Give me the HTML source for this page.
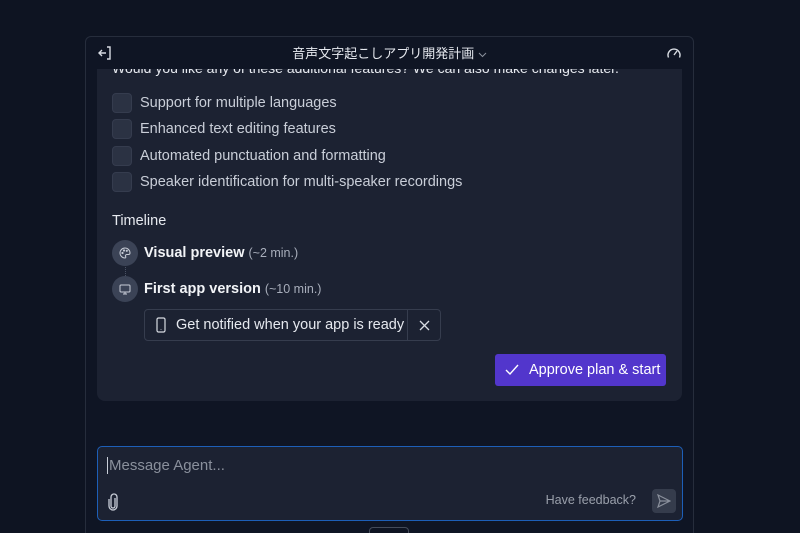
<!DOCTYPE html>
<html style="width:800px;height:533px;overflow:hidden"><head><meta charset="utf-8"><style>
*{box-sizing:border-box;margin:0;padding:0}
body{width:800px;height:533px;overflow:hidden;background:#0e1422;font-family:"Liberation Sans","Noto Sans CJK JP",sans-serif;color:#e6e9ef;position:relative}
.panel{position:absolute;left:85px;top:36px;width:609px;height:510px;border:1px solid #262d3c;border-radius:6px;background:#0f1524}
.hdr{position:absolute;left:0;top:0;width:100%;height:32px}
.title{position:absolute;left:0;right:0;top:6px;text-align:center;font-size:13px;color:#e6e9ef}
.card{position:absolute;left:11px;top:32px;width:585px;height:332px;background:#1c2232;border-radius:0 0 8px 8px;overflow:hidden}
.q{position:absolute;left:15px;top:-9px;font-size:14px;color:#e6e9ef}
.opt{position:absolute;left:15px;font-size:14.5px;color:#c9ced8;display:flex;align-items:center}
.cb{width:20px;height:20px;border-radius:4px;background:#2b3243;border:1px solid #353c4e;margin-right:8px}
.tl{position:absolute;left:15px;top:144px;font-size:14.5px;color:#e6e9ef}
.step{position:absolute;left:15px;display:flex;align-items:center;font-size:14.5px}
.ic{width:26px;height:26px;border-radius:50%;background:#3b4356;display:flex;align-items:center;justify-content:center;margin-right:6px}
.step b{color:#f2f4f7}
.step span{color:#a8aebb;font-size:12.5px;margin-left:4px}
.notif{position:absolute;left:47px;top:240px;width:297px;height:32px;border:1px solid #363d4e;border-radius:4px;display:flex;align-items:center;font-size:14.5px;color:#e6e9ef}
.notif .x{position:absolute;right:0;top:0;width:33px;height:30px;border-left:1px solid #363d4e;display:flex;align-items:center;justify-content:center}
.btn{position:absolute;left:398px;top:285px;width:171px;height:32px;background:#5236cc;border-radius:3px;font-size:14.5px;color:#fff;display:flex;align-items:center;padding-left:10px}
.inp{position:absolute;left:11px;top:409px;width:586px;height:75px;border:1px solid #1d5fb8;border-radius:5px;background:#1c2232}
.ph{position:absolute;left:9px;top:10px;font-size:15px;color:#8a909c;border-left:1px solid #c9ced8;padding-left:1px}
.fb{position:absolute;right:46px;top:46px;font-size:12.5px;color:#9aa0ab}
.send{position:absolute;right:6px;top:42px;width:24px;height:24px;border-radius:4px;background:#353c4c;display:flex;align-items:center;justify-content:center}
.tab{position:absolute;left:369px;top:527px;width:40px;height:10px;border:1px solid #444b5a;border-radius:4px;background:#0e1422}
</style></head><body>
<div class="panel">
 <div class="hdr">
  <svg style="position:absolute;left:11px;top:8px" width="16" height="16" viewBox="0 0 16 16" fill="none" stroke="#d8dce3" stroke-width="1.4"><path d="M10 2h3v12h-3M9 8H2M5 5L2 8l3 3"/></svg>
  <div class="title">音声文字起こしアプリ開発計画 <svg width="9" height="6" viewBox="0 0 9 6" fill="none" stroke="#8a909c" stroke-width="1"><path d="M1 1l3.5 3.5L8 1"/></svg></div>
  <svg style="position:absolute;right:11px;top:8px" width="16" height="16" viewBox="0 0 16 16" fill="none" stroke="#d8dce3" stroke-width="1.4"><path d="M2.5 12.5A6 6 0 1 1 13.5 12.5M8 10l3-4"/></svg>
 </div>
 <div class="card">
  <div class="q">Would you like any of these additional features? We can also make changes later.</div>
  <div class="opt" style="top:24px"><div class="cb"></div>Support for multiple languages</div>
  <div class="opt" style="top:50px"><div class="cb"></div>Enhanced text editing features</div>
  <div class="opt" style="top:77px"><div class="cb"></div>Automated punctuation and formatting</div>
  <div class="opt" style="top:103px"><div class="cb"></div>Speaker identification for multi-speaker recordings</div>
  <div class="tl">Timeline</div>
  <div class="step" style="top:171px"><div class="ic"><svg width="12" height="12" viewBox="0 0 12 12" fill="none" stroke="#c9ced8" stroke-width="1"><path d="M6 1a5 5 0 1 0 0 10c1 0 1-1 .5-1.8S7 7.5 8 7.5h1.5A1.5 1.5 0 0 0 11 6 5 5 0 0 0 6 1z"/><circle cx="3.5" cy="6" r=".6"/><circle cx="5" cy="3.5" r=".6"/><circle cx="7.8" cy="3.8" r=".6"/></svg></div><b>Visual preview</b><span>(~2 min.)</span></div>
  <div style="position:absolute;left:28px;top:198px;height:9px;border-left:1px dotted #4a5264"></div>
  <div class="step" style="top:207px"><div class="ic"><svg width="12" height="12" viewBox="0 0 12 12" fill="none" stroke="#c9ced8" stroke-width="1"><rect x="1" y="2" width="10" height="7" rx="1"/><path d="M6 9v2M4 11h4"/></svg></div><b>First app version</b><span>(~10 min.)</span></div>
  <div class="notif"><svg style="margin:0 10px 0 11px" width="10" height="16" viewBox="0 0 10 16" fill="none" stroke="#d8dce3" stroke-width="1.2"><rect x="1" y="1" width="8" height="14" rx="1.5"/><path d="M5 12.5v.5"/></svg>Get notified when your app is ready<div class="x"><svg width="11" height="11" viewBox="0 0 11 11" stroke="#d8dce3" stroke-width="1.3"><path d="M1 1l9 9M10 1l-9 9"/></svg></div></div>
  <div class="btn"><svg style="margin-right:10px" width="14" height="12" viewBox="0 0 14 12" fill="none" stroke="#fff" stroke-width="1.4"><path d="M1 6l4 4 8-9"/></svg>Approve plan &amp; start</div>
 </div>
 <div class="inp">
  <div class="ph">Message Agent...</div>
  <svg style="position:absolute;left:9px;top:46px" width="12" height="18" viewBox="0 0 12 18" fill="none" stroke="#c9ced8" stroke-width="1.3"><path d="M8 5v8a2 2 0 0 1-4 0V4a3 3 0 0 1 6 0v9a4 4 0 0 1-8 0V6"/></svg>
  <div class="fb">Have feedback?</div>
  <div class="send"><svg width="14" height="14" viewBox="0 0 14 14" fill="none" stroke="#8a909c" stroke-width="1.2"><path d="M1 1l12 6-12 6 2-6zM3 7h10"/></svg></div>
 </div>
</div>
<div class="tab"></div>
</body></html>
